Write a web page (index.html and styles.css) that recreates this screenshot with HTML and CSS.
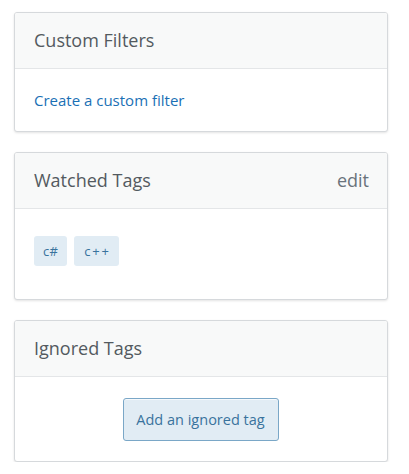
FILE: index.html
```html
<!DOCTYPE html>
<html>
<head>
<meta charset="utf-8">
<link rel="stylesheet" href="styles.css">
</head>
<body>
<div class="sidebar">
  <section class="card">
    <header class="card-head"><h2 class="card-title">Custom Filters</h2></header>
    <div class="card-body body-filters">
      <a class="link" href="#">Create a custom filter</a>
    </div>
  </section>
  <section class="card">
    <header class="card-head"><h2 class="card-title">Watched Tags</h2><a class="edit" href="#">edit</a></header>
    <div class="card-body body-tags">
      <span class="tag">c#</span>
      <span class="tag tag-spaced">c++</span>
    </div>
  </section>
  <section class="card">
    <header class="card-head"><h2 class="card-title">Ignored Tags</h2></header>
    <div class="card-body body-ignored">
      <button class="btn">Add an ignored tag</button>
    </div>
  </section>
</div>
</body>
</html>
```
FILE: styles.css
```css
html, body {
  margin: 0;
  padding: 0;
  background: #ffffff;
}
body {
  font-family: "Open Sans", "Noto Sans", sans-serif;
  color: #3b4045;
}
.sidebar {
  display: flex;
  flex-direction: column;
  gap: 20px;
  padding: 12px 0 0 14px;
  width: 374px;
}
.card {
  border: 1px solid #d6d9dc;
  border-radius: 3px;
  background: #ffffff;
  box-shadow: 0 1px 3px rgba(0, 0, 0, 0.08), 0 1px 2px rgba(0, 0, 0, 0.04);
  overflow: hidden;
}
.card-head {
  display: flex;
  align-items: center;
  justify-content: space-between;
  height: 55px;
  padding: 0 18px 0 19px;
  background: #f8f9f9;
  border-bottom: 1px solid #e4e6e8;
}
.card-title {
  margin: 0;
  font-size: 18px;
  font-weight: 400;
  color: #535a60;
  line-height: 1;
  padding-bottom: 2px;
}
.edit {
  font-size: 18px;
  line-height: 1;
  padding-bottom: 2px;
  color: #6a737c;
  text-decoration: none;
}
.card-body {
  padding: 0 19px;
}
.body-filters {
  height: 62px;
  display: flex;
  align-items: center;
}
.link {
  font-size: 15px;
  color: #1a70b5;
  text-decoration: none;
}
.body-tags {
  display: flex;
  gap: 7px;
  padding-top: 27px;
  padding-bottom: 33px;
}
.tag {
  display: inline-flex;
  align-items: center;
  justify-content: center;
  height: 30px;
  padding: 0 9px;
  border-radius: 3px;
  background: #e1ecf4;
  color: #39739d;
  font-size: 13px;
  letter-spacing: 0.3px;
}
.tag-spaced {
  letter-spacing: 1.8px;
  padding: 0 8px 0 10px;
}
.body-ignored {
  display: flex;
  justify-content: center;
  padding-top: 21px;
  padding-bottom: 20px;
}
.btn {
  height: 43px;
  width: 156px;
  margin-left: -1px;
  border: 1px solid #7aa7c7;
  border-radius: 3px;
  background: #e1ecf4;
  color: #39739d;
  font-family: "Open Sans", "Noto Sans", sans-serif;
  font-size: 14.5px;
  box-shadow: inset 0 1px 0 rgba(255, 255, 255, 0.7);
}
```
